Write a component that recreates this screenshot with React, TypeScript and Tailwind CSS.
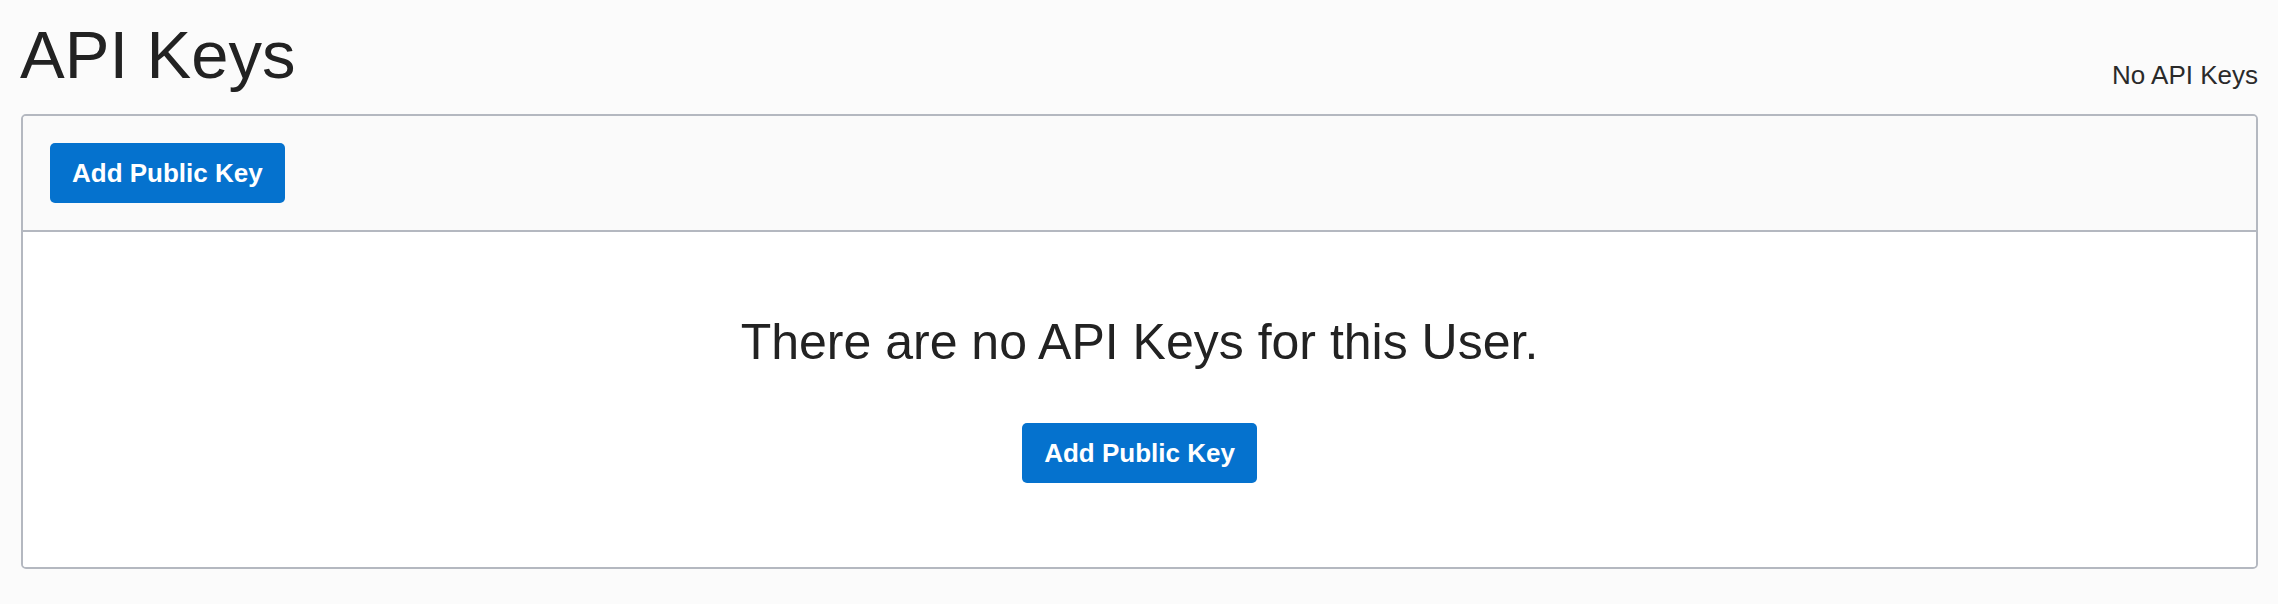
function AddButton() {
    return (
        <button className="inline-flex h-[60px] items-center justify-center rounded-[5px] bg-[#0572ce] px-[22px] text-[26px] font-bold text-white">
            Add Public Key
        </button>
    );
}

export default function App() {
    return (
        <div className="min-h-screen bg-[#fbfbfb] pl-[21px] pr-[20px] pb-[35px] font-['Liberation_Sans',Arial,sans-serif] text-[#222]">
            {/* Title row */}
            <div className="flex items-start justify-between pt-[15px]">
                <h1 className="text-[67px] leading-[80px] -ml-[1px]">API Keys</h1>
                <span className="mt-[45px] text-[26px] leading-[31px] text-[#2a2a2a]">No API Keys</span>
            </div>

            {/* Card */}
            <div className="mt-[19px] overflow-hidden rounded-[5px] border-2 border-[#b4b8c0]">
                <div className="border-b-2 border-[#b4b8c0] bg-[#fafafa] px-[27px] py-[27px]">
                    <AddButton />
                </div>
                <div className="flex flex-col items-center bg-white pt-[81px] pb-[84px]">
                    <p className="text-[50px] leading-[58px]">There are no API Keys for this User.</p>
                    <div className="mt-[52px]">
                        <AddButton />
                    </div>
                </div>
            </div>
        </div>
    );
}
